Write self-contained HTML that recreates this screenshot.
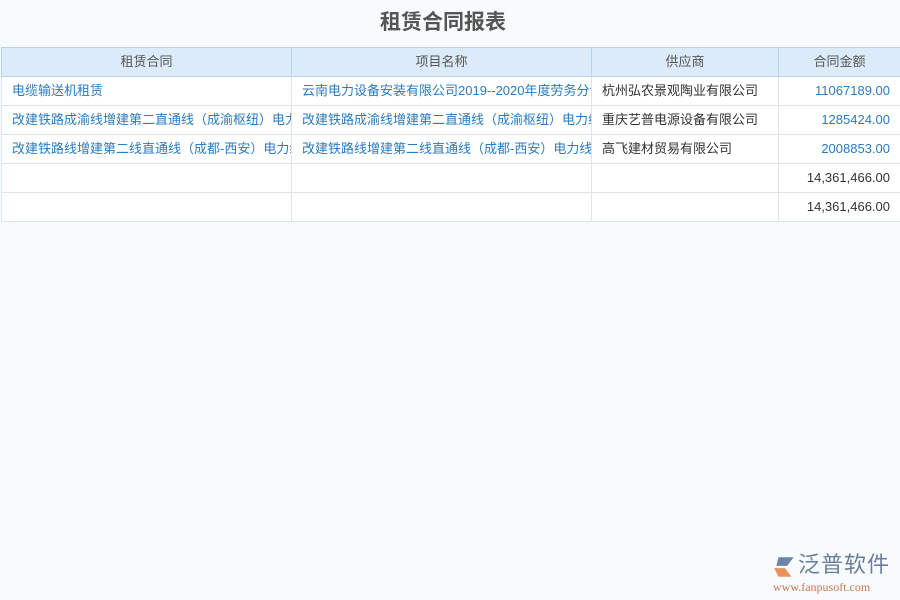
<!DOCTYPE html>
<html><head><meta charset="utf-8"><style>
body{margin:0;width:900px;height:600px;background:#f8fbfd;font-family:"Liberation Sans","Noto Sans CJK SC",sans-serif;position:relative;overflow:hidden}
h1{margin:0;position:absolute;top:9px;left:0;width:886px;text-align:center;font-size:21px;font-weight:bold;color:#555;line-height:28px}
table{position:absolute;top:47px;left:1px;width:899px;border-collapse:collapse;table-layout:fixed;font-size:13px}
td,th{border:1px solid #dde4ea;height:28px;line-height:28px;padding:0 10px;white-space:nowrap;overflow:hidden;background:#fff;vertical-align:middle}
th{background:#dcebf9;border-color:#b8d2ea;font-weight:normal;color:#555}
td{color:#2a7bbf}
td.b{color:#333}
td.r{text-align:right;padding-right:10px}
.logo{position:absolute;left:770px;top:551px}
</style></head><body>
<h1>租赁合同报表</h1>
<table>
<colgroup><col style="width:290px"><col style="width:300px"><col style="width:187px"><col style="width:122px"></colgroup>
<tr><th>租赁合同</th><th>项目名称</th><th>供应商</th><th>合同金额</th></tr>
<tr><td>电缆输送机租赁</td><td>云南电力设备安装有限公司2019--2020年度劳务分包</td><td class="b">杭州弘农景观陶业有限公司</td><td class="r">11067189.00</td></tr>
<tr><td>改建铁路成渝线增建第二直通线（成渝枢纽）电力线</td><td>改建铁路成渝线增建第二直通线（成渝枢纽）电力线路</td><td class="b">重庆艺普电源设备有限公司</td><td class="r">1285424.00</td></tr>
<tr><td>改建铁路线增建第二线直通线（成都-西安）电力线路</td><td>改建铁路线增建第二线直通线（成都-西安）电力线路</td><td class="b">高飞建材贸易有限公司</td><td class="r">2008853.00</td></tr>
<tr><td></td><td></td><td></td><td class="r b">14,361,466.00</td></tr>
<tr><td></td><td></td><td></td><td class="r b">14,361,466.00</td></tr>
</table>
<div class="logo">
<svg width="26" height="24" style="position:absolute;left:2px;top:4px" viewBox="0 0 24 22"><path d="M6 2 L20 2 L14 10 L4 10 Z" fill="#6b86a8"/><path d="M2 12 L12 12 L18 20 L6 20 Z" fill="#e8935a"/></svg>
<div style="position:absolute;left:28px;top:0;font-size:22px;line-height:28px;color:#6b7f99;letter-spacing:1px;white-space:nowrap">泛普软件</div>
<div style="position:absolute;left:3px;top:29px;font-size:12px;line-height:14px;color:#c57a4e;font-family:'Liberation Serif',serif;white-space:nowrap">www.fanpusoft.com</div>
</div>
</body></html>
